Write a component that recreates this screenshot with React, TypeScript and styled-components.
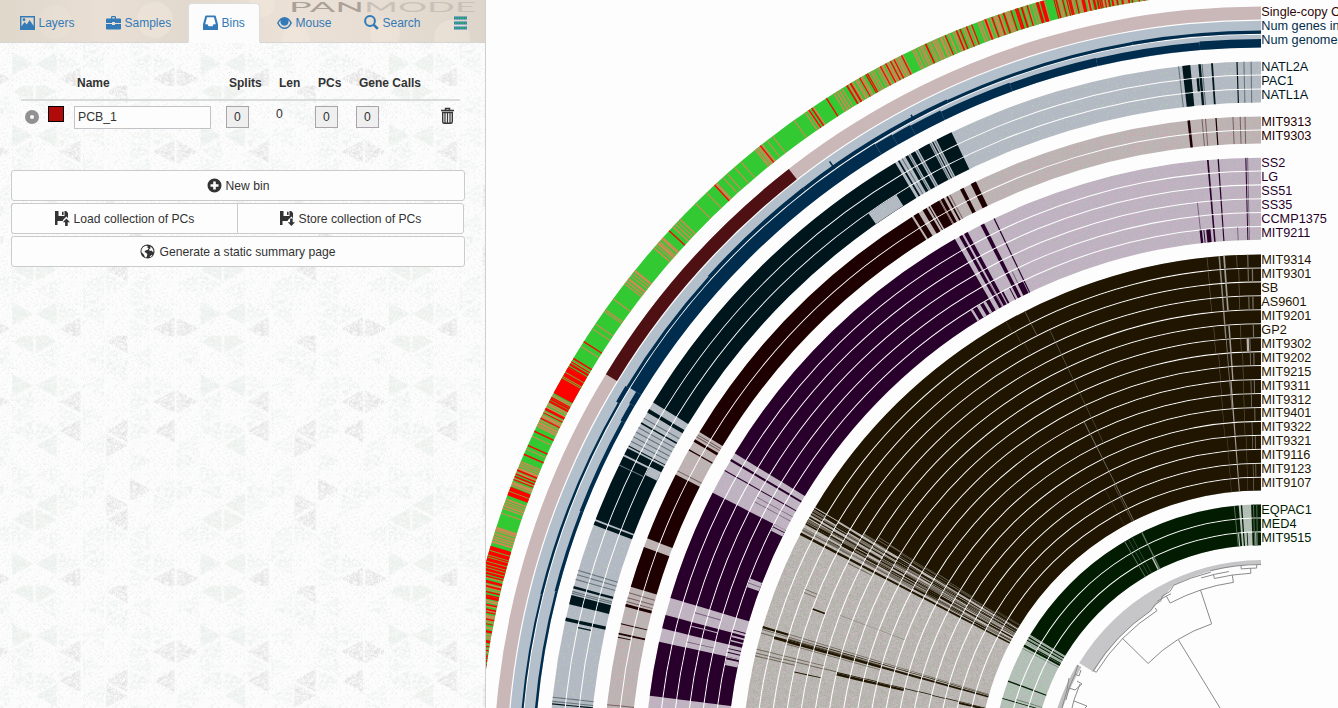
import React from 'react';
import styled, { createGlobalStyle } from 'styled-components';

const GlobalStyle = createGlobalStyle`
  * { box-sizing: border-box; }
  body {
    margin: 0;
    background: #fdfdfd;
    font-family: "Liberation Sans", Arial, sans-serif;
    font-size: 12.15px;
    color: #333;
    overflow: hidden;
  }
`;

const Page = styled.div`
  display: flex;
  width: 1338px;
  height: 708px;
  overflow: hidden;
`;

const Panel = styled.aside`
  position: relative;
  display: flex;
  flex-direction: column;
  flex: none;
  width: 486px;
  height: 708px;
  border-right: 1px solid #cfcfcf;
  background: #fcfcfc;
`;

const Backdrop = styled.svg`
  position: absolute;
  inset: 0;
`;

const TabBar = styled.nav`
  position: relative;
  display: flex;
  align-items: flex-end;
  gap: 2px;
  height: 43px;
  padding-left: 5px;
  border-bottom: 1px solid #d6d6d6;
  background: linear-gradient(90deg, #e0d7cb 0, #e9dfd4 22%, #e2d9ce 38%, #ebe1d6 60%, #e7ddd2 78%, #ddd5cb 100%);
`;

const Glow = styled.svg`
  position: absolute;
  left: 0;
  top: 0;
`;

const Tab = styled.a<{ $width: number; $active?: boolean }>`
  position: relative;
  display: flex;
  align-items: center;
  gap: 3.5px;
  width: ${(p) => p.$width}px;
  height: 40px;
  margin-bottom: -1px;
  padding: 0 0 1px 14px;
  border: 1px solid ${(p) => (p.$active ? '#ddd' : 'transparent')};
  border-bottom-color: ${(p) => (p.$active ? '#fcfcfc' : 'transparent')};
  border-radius: 4px 4px 0 0;
  background: ${(p) => (p.$active ? '#fcfcfc' : 'transparent')};
  color: #337ab7;
  font-size: 12px;
  white-space: nowrap;
`;

const Icon = styled.svg`
  flex: none;
  display: block;
  fill: currentColor;
`;

const BinTable = styled.section`
  position: relative;
  margin: 27px 25px 0 21px;
`;

const BinGrid = styled.div`
  display: grid;
  grid-template-columns: 24px 29px 152px 50px 39px 41px 85px 1fr;
`;

const HeadRow = styled(BinGrid)`
  height: 31px;
  padding-top: 6px;
  border-bottom: 2px solid #dadcdb;
  font-size: 12px;
  font-weight: bold;
`;

const HeadCell = styled.span`
  padding-left: 3px;
  white-space: nowrap;
`;

const BinRow = styled(BinGrid)`
  padding-top: 5px;
  height: 31px;
`;

const Radio = styled.span`
  width: 14px;
  height: 14px;
  margin: 4px 0 0 4px;
  border: 5px solid #919194;
  border-radius: 50%;
  background: #fcfcfc;
`;

const Swatch = styled.span`
  width: 16px;
  height: 16px;
  margin-left: 3px;
  border: 1px solid #000;
  background: #b00a0a;
`;

const NameField = styled.div`
  width: 137px;
  height: 23px;
  padding: 3px 3px;
  border: 1px solid #c4c2c6;
  background: #fdfdfd;
  font-size: 12.3px;
`;

const CountButton = styled.button`
  width: 23px;
  height: 22px;
  padding: 0 0 1px;
  border: 1px solid #aaa5ab;
  background: #efefef;
  color: #333;
  font: inherit;
`;

const Length = styled.span`
  padding: 1px 0 0 0;
`;

const Actions = styled.section`
  position: relative;
  display: flex;
  flex-direction: column;
  gap: 2px;
  margin: 38px 20px 0 11px;
`;

const ButtonPair = styled.div`
  display: flex;
  padding-right: 1px;
`;

const Button = styled.button<{ $side?: 'left' | 'right' }>`
  display: flex;
  flex: ${(p) => (p.$side === 'left' ? '0 0 226px' : '1 1 auto')};
  align-items: center;
  justify-content: center;
  gap: 4px;
  height: 31px;
  padding: 0;
  border: 1px solid #cbcbcb;
  border-right-width: ${(p) => (p.$side === 'left' ? 0 : 1)}px;
  border-radius: ${(p) => (p.$side === 'left' ? '3px 0 0 3px' : p.$side === 'right' ? '0 3px 3px 0' : '3px')};
  background: #fdfdfd;
  color: #333;
  font: inherit;
  font-size: 12.15px;
`;

const Display = styled.main`
  flex: 1;
  height: 708px;
  background: #fdfdfd;
`;

const Figure = styled.svg`
  display: block;
`;

const random = (seed: number) => {
  let s = seed;
  return () => {
    s = (s * 1664525 + 1013904223) % 4294967296;
    return s / 4294967296;
  };
};

interface SpeckleProps {
  id: string;
  base: string;
  specks: string[];
  share: number;
  seed: number;
}

// A repeating tile of single-pixel specks over a plain base.
const Speckle = ({ id, base, specks, share, seed }: SpeckleProps) => {
  const rnd = random(seed);
  const size = 32;
  const cells: Record<string, string> = {};
  for (let y = 0; y < size; y++)
    for (let x = 0; x < size; x++) {
      if (rnd() > share) continue;
      const color = specks[Math.floor(rnd() * specks.length)];
      cells[color] = (cells[color] ?? '') + `M${x} ${y}h1v1h-1z`;
    }
  return (
    <pattern id={id} width={size} height={size} patternUnits="userSpaceOnUse">
      <rect width={size} height={size} fill={base} />
      {Object.entries(cells).map(([color, d]) => (
        <path key={color} d={d} fill={color} shapeRendering="crispEdges" />
      ))}
    </pattern>
  );
};

/* ---------- side panel backdrop ---------- */

type Tone = 'd' | 'g' | 'f';

// [column, vertical centre, pointing direction, tone]
const TRIANGLES: [number, number, 'l' | 'r', Tone][] = [
  [0, 6, 'l', 'g'], [1, 6, 'r', 'g'], [4, 6, 'l', 'd'], [3, 21, 'l', 'f'], [4, 21, 'r', 'f'], [5, 21, 'l', 'f'], [7, 21, 'l', 'f'], [1, 21, 'l', 'f'], [4, 35, 'l', 'f'],
  [0, 50, 'r', 'g'], [1, 50, 'l', 'g'], [2, 50, 'r', 'f'], [3, 50, 'l', 'f'], [5, 50, 'l', 'f'], [6, 50, 'r', 'f'],
  [2, 66, 'l', 'd'], [6, 66, 'l', 'd'], [7, 66, 'r', 'd'], [5, 66, 'r', 'f'], [0, 66, 'l', 'f'],
  [0, 81, 'r', 'f'], [3, 81, 'r', 'f'], [5, 81, 'l', 'f'], [2, 81, 'r', 'f'],
  [2, 95, 'l', 'd'], [4, 95, 'l', 'd'], [6, 95, 'l', 'd'], [0, 95, 'l', 'f'], [1, 95, 'r', 'f'], [5, 95, 'r', 'f'],
  [1, 110, 'l', 'g'], [4, 110, 'r', 'd'], [3, 110, 'l', 'f'], [7, 110, 'l', 'f'], [7, 125, 'r', 'f'], [5, 125, 'r', 'f'],
  [0, 139, 'r', 'f'], [1, 139, 'l', 'f'], [3, 139, 'l', 'f'], [5, 154, 'r', 'd'], [0, 154, 'l', 'f'], [3, 154, 'r', 'f'], [6, 154, 'l', 'f'], [7, 154, 'r', 'f'], [2, 154, 'r', 'f'],
  [1, 169, 'l', 'g'], [4, 169, 'r', 'd'], [2, 169, 'r', 'f'], [6, 169, 'r', 'f'], [0, 184, 'l', 'g'], [1, 184, 'r', 'g'], [4, 184, 'l', 'd'],
  [0, 199, 'r', 'f'], [3, 199, 'l', 'f'], [4, 199, 'r', 'f'], [5, 199, 'l', 'f'], [7, 199, 'l', 'f'], [3, 213, 'r', 'f'], [1, 205, 'l', 'f'], [5, 213, 'r', 'f'],
  [0, 228, 'r', 'g'], [1, 228, 'l', 'g'], [2, 228, 'r', 'f'], [3, 228, 'l', 'f'], [5, 228, 'l', 'f'], [6, 228, 'r', 'f'],
  [2, 243, 'l', 'd'], [6, 243, 'l', 'd'], [7, 243, 'r', 'd'], [5, 243, 'r', 'f'],
];

const triangle = (col: number, cy: number, dir: 'l' | 'r') => {
  const x0 = col * 23.54;
  const x1 = x0 + 21;
  const [base, apex] = dir === 'l' ? [x1, x0] : [x0, x1];
  return `${base},${cy - 11.5} ${apex},${cy} ${base},${cy + 11.5}`;
};

const PanelBackdrop = () => (
  <Backdrop width="485" height="708">
    <defs>
      <Speckle id="grain" base="#fcfcfc" specks={['#f1f3f2']} share={0.16} seed={4} />
      <Speckle id="tone-d" base="#fafafa" specks={['#e3e3e3', '#e7e7e7']} share={0.55} seed={11} />
      <Speckle id="tone-g" base="#eff3f0" specks={['#e9eeeb', '#f8faf9']} share={0.5} seed={23} />
      <Speckle id="tone-f" base="#fbfcfb" specks={['#ecf0ee']} share={0.36} seed={37} />
      <pattern id="mosaic" x="12.3" y="85.7" width="188.3" height="250" patternUnits="userSpaceOnUse">
        {TRIANGLES.map(([c, y, d, t], i) => (
          <polygon key={i} points={triangle(c, y, d)} fill={`url(#tone-${t})`} />
        ))}
      </pattern>
    </defs>
    <rect width="485" height="708" fill="url(#grain)" />
    <rect width="485" height="708" fill="url(#mosaic)" />
  </Backdrop>
);

/* ---------- circular phylogram ---------- */

const CX = 1261;
const CY = 774;
const rad = (deg: number) => (deg * Math.PI) / 180;
const pt = (r: number, deg: number) =>
  `${(CX - r * Math.sin(rad(deg))).toFixed(2)} ${(CY - r * Math.cos(rad(deg))).toFixed(2)}`;

// Ring sector between two radii; angles run counter-clockwise from twelve o'clock.
const sector = (outer: number, inner: number, from: number, to: number) =>
  `M${pt(outer, from)}A${outer} ${outer} 0 0 0 ${pt(outer, to)}L${pt(inner, to)}A${inner} ${inner} 0 0 1 ${pt(inner, from)}Z`;

const arc = (r: number, from: number, to: number) => `M${pt(r, from)}A${r} ${r} 0 0 0 ${pt(r, to)}`;

type Span = [number, number];
interface Mark {
  from: number;
  to: number;
  fill: string;
}

interface RingProps {
  outer: number;
  inner: number;
  base: string;
  marks: Mark[];
}

const Ring = ({ outer, inner, base, marks }: RingProps) => {
  const byFill = new Map<string, string>();
  marks.forEach((m) => byFill.set(m.fill, (byFill.get(m.fill) ?? '') + sector(outer, inner, m.from, m.to)));
  return (
    <g>
      <path d={sector(outer, inner, 0, 89)} fill={base} />
      {[...byFill].map(([fill, d]) => (
        <path key={fill} d={d} fill={fill} />
      ))}
    </g>
  );
};

const TEAL_LIGHT = 'url(#light-teal)';
const MAROON_LIGHT = 'url(#light-maroon)';
const PURPLE_LIGHT = 'url(#light-purple)';
const BROWN_LIGHT = 'url(#light-brown)';
const GREEN_LIGHT = 'url(#light-green)';

interface Group {
  top: number;
  pitch: number;
  thick: number;
  count: number;
  light: string;
  dark: string;
  mid: string;
  solid: Span[];
  thin: number[];
  extra?: (row: number) => Mark[];
}

const GROUPS: Group[] = [
  {
    top: 712.4, pitch: 14, thick: 13, count: 3, light: TEAL_LIGHT, dark: '#00161d', mid: '#66757b',
    solid: [
      [5.7, 6.35], [4.85, 5.05], [3.87, 4.02], [1.88, 1.98], [25.75, 27.1], [27.4, 27.5], [27.75, 28.75], [29.05, 29.45], [29.7, 29.95], [30.5, 30.65], [30.9, 58.57],
      [59.19, 59.5], [60.42, 60.55], [62.55, 62.63], [62.78, 63.35], [63.5, 69.05], [69.2, 69.53], [74.7, 74.9], [75.44, 76.21], [77.32, 77.59], [84.3, 84.4],
    ],
    thin: [6.6, 4.7, 1.33, 0.75, 27.2, 27.6, 28.85, 29.55, 30.2, 60.0, 60.86, 61.27, 61.7, 62.1, 73.35, 73.71, 74.1, 75.1, 75.25, 83.77, 84.1],
    extra: (row) => {
      if (row === 2) return [{ from: 32.2, to: 35, fill: TEAL_LIGHT }, { from: 63.3, to: 64.1, fill: TEAL_LIGHT }];
      if (row === 1) return [{ from: 77.85, to: 77.95, fill: '#00161d' }, { from: 64.25, to: 64.33, fill: '#66757b' }, { from: 5.1, to: 5.3, fill: '#00161d' }];
      return [{ from: 64.25, to: 64.33, fill: '#66757b' }];
    },
  },
  {
    top: 657.5, pitch: 14, thick: 13, count: 2, light: MAROON_LIGHT, dark: '#1f0000', mid: '#7a6060',
    solid: [
      [6.2, 6.43], [3.87, 3.98], [25.7, 26.2], [26.9, 27.24], [28.45, 28.6], [28.85, 29.15], [29.3, 30.16], [30.3, 30.38], [30.57, 30.97], [31.4, 31.9], [32.08, 58.65],
      [59.4, 59.65], [60.4, 60.52], [62.9, 69], [69.8, 73.45], [75, 75.25], [76.75, 76.83], [77.6, 77.75],
    ],
    thin: [5.1, 4.8, 2.4, 1.77, 1.35, 28.2, 29.2, 58.9, 59.1, 62.5, 73.96, 74.4, 74.75, 83.9],
    extra: (row) => (row ? [] : [{ from: 77.95, to: 78.03, fill: '#1f0000' }]),
  },
  {
    top: 616.3, pitch: 13.85, thick: 12.8, count: 6, light: PURPLE_LIGHT, dark: '#28002b', mid: '#79617c',
    solid: [
      [4.87, 5.03], [3.92, 4.04], [1.36, 1.46], [25.6, 25.72], [26.7, 27.07], [28.43, 28.8], [29, 29.32], [29.78, 58.64],
      [59.26, 59.47], [60.44, 60.54], [62.84, 73.4], [75.05, 76.33], [77.6, 82.7],
    ],
    thin: [1.2],
    extra: (row) => {
      const dark = '#28002b';
      const light = PURPLE_LIGHT;
      const mid = '#79617c';
      const marks: Mark[] = [];
      if (row >= 3) marks.push({ from: 6.3, to: 6.4, fill: mid }, { from: 61.2, to: 61.27, fill: mid }, { from: 61.7, to: 61.78, fill: mid });
      if (row >= 4) marks.push({ from: 28.9, to: 29, fill: mid }, { from: 26.3, to: 26.4, fill: mid });
      if (row === 2 || row === 3) marks.push({ from: 74.05, to: 74.15, fill: mid }, { from: 75.4, to: 75.5, fill: light }, { from: 77, to: 77.08, fill: mid });
      if (row === 5)
        marks.push(
          { from: 5.3, to: 5.75, fill: dark }, { from: 6.2, to: 6.45, fill: dark }, { from: 5.95, to: 6.05, fill: dark }, { from: 2.4, to: 2.5, fill: mid },
          { from: 25.8, to: 26.4, fill: dark }, { from: 27.3, to: 27.4, fill: dark }, { from: 28.1, to: 28.3, fill: dark },
          { from: 30.2, to: 30.5, fill: light }, { from: 30.9, to: 31.3, fill: light }, { from: 31.8, to: 32.05, fill: light },
          { from: 62.84, to: 63.6, fill: light }, { from: 63.1, to: 63.2, fill: dark }, { from: 69.05, to: 70, fill: light },
          { from: 69.5, to: 69.6, fill: mid }, { from: 74.7, to: 74.8, fill: dark }, { from: 75.3, to: 75.5, fill: light },
          { from: 75.8, to: 75.95, fill: light }, { from: 76.7, to: 76.8, fill: dark }, { from: 77.1, to: 77.2, fill: dark },
          { from: 77.6, to: 78.5, fill: light }, { from: 77.7, to: 77.9, fill: dark },
        );
      return marks;
    },
  },
  {
    top: 519.5, pitch: 13.95, thick: 12.9, count: 17, light: BROWN_LIGHT, dark: '#1f1500', mid: '#777064',
    solid: [[0, 59.1], [59.45, 59.62], [59.95, 60.1], [60.65, 60.75], [61.1, 61.3], [62.3, 62.6]],
    thin: [59.8, 60.4, 61.7],
    extra: (row) => {
      const rnd = random(911 + row * 57);
      const dark = '#1f1500';
      const mid = '#6f675a';
      const light = BROWN_LIGHT;
      const marks: Mark[] = [];
      const lines = (at: number, w: number, fill: string) => marks.push({ from: at, to: at + w, fill });
      for (let k = 0; k < 11; k++) lines(59.2 + rnd() * 2.8, 0.1 + rnd() * 0.16, k % 2 ? dark : mid);
      if (row > 3) for (let k = 0; k < 3; k++) lines(58.2 + rnd() * 0.8, 0.1, mid);
      if (row < 11) lines(4.52, row < 6 ? 0.18 : 0.1, '#8b857c');
      if (row !== 4) {
        lines(3.98 + (row > 8 ? 0.3 : 0), 0.2, '#a19c95');
        if (row % 3 !== 2) lines(1.4, 0.13, '#777064');
        lines(2.45 + rnd() * 0.2, 0.1, '#5b5345');
        if (row % 2) lines(0.9, 0.15, '#777064');
        lines(5.7 + rnd() * 0.4, 0.08, '#5b5345');
      }
      if (row === 6) lines(1.6, 0.3, light);
      if (row > 1 && row < 11) lines(25.4, 0.09, '#5b5345');
      if (row > 8) lines(26.6, 0.14, '#777064');
      if (row > 13) lines(26.95, 0.14, '#5b5345');
      if (row > 13) lines(28.7, 0.1, '#463c2a');
      if (row < 3) lines(28.4 + rnd(), 0.07, '#463c2a');
      if (row < 2) lines(27, 0.1, '#5b5345');
      lines(73.45 + row * 0.01, row < 2 ? 0.25 : 0.1, row < 2 ? dark : mid);
      lines(73.8, 0.1, row > 3 ? dark : mid);
      lines(row < 2 ? 74.2 : 74.25 - row * 0.014, row < 1 ? 0.1 : 0.32, row < 1 ? mid : dark);
      if (row > 1 && row < 9) { lines(73.98, 0.15, mid); lines(74.65, 0.1, mid); lines(74.1, 0.1, dark); }
      lines(76.4 + rnd() * 0.1, 0.12, row > 5 ? dark : mid);
      if (row < 5) lines(76.05, 0.1, mid);
      if ((row > 5 && row < 11) || row > 14) lines(76.6, 0.35, dark);
      if (row > 2 && row < 5) lines(77.6, 0.12, dark);
      if (row < 3) lines(76.8, 0.12, mid);
      if (row === 3) lines(69.7, 0.2, dark);
      if (row === 2) { lines(67.9, 0.1, mid); lines(68.3, 0.1, mid); }
      if (row > 4 && row < 10) lines(69.3, 0.1, '#948e86');
      if (row === 4 || row === 5) lines(62.9, 0.12, mid);
      return marks;
    },
  },
  {
    top: 269.5, pitch: 13.95, thick: 12.9, count: 3, light: GREEN_LIGHT, dark: '#021c02', mid: '#5f7461',
    solid: [[0, 2.1], [4, 4.3], [4.75, 58.9], [59.4, 59.7], [60.1, 60.35], [61.3, 61.8], [69.7, 70], [73.6, 73.8]],
    thin: [59.1, 59.9, 60.6, 60.9, 62.2],
    extra: (row) => {
      const mid = '#5f7461';
      const marks: Mark[] = [
        { from: 30.3, to: 30.5, fill: mid }, { from: 29.4, to: 29.55, fill: '#3d543f' }, { from: 26.1, to: 26.4, fill: mid },
        { from: 28.5, to: 28.65, fill: '#3d543f' }, { from: 0.8, to: 1, fill: mid }, { from: 1.5, to: 1.7, fill: mid }, { from: 5.6, to: 5.8, fill: mid },
      ];
      if (row === 2) marks.push({ from: 26.5, to: 26.85, fill: GREEN_LIGHT }, { from: 1.1, to: 1.4, fill: GREEN_LIGHT }, { from: 5.2, to: 5.5, fill: GREEN_LIGHT }, { from: 3.2, to: 3.4, fill: '#021c02' });
      if (row > 0) marks.push({ from: 61, to: 61.25, fill: '#021c02' }, { from: 73, to: 73.15, fill: mid });
      return marks;
    },
  },
];

const GroupRings = ({ group }: { group: Group }) => (
  <>
    {Array.from({ length: group.count }, (_, row) => {
      const outer = group.top - row * group.pitch;
      const marks: Mark[] = [
        ...group.solid.map(([from, to]) => ({ from, to, fill: group.dark })),
        ...group.thin.map((a) => ({ from: a, to: a + 0.09, fill: group.mid })),
      ];
      return (
        <g key={row}>
          <Ring outer={outer} inner={outer - group.thick} base={group.light} marks={marks} />
          {(group.extra?.(row) ?? []).map((m, i) => (
            <path key={i} d={sector(outer, outer - group.thick, m.from, m.to)} fill={m.fill} />
          ))}
        </g>
      );
    })}
  </>
);

const RED = '#ff0000';
const TAN = '#cc8a55';
const GREEN = '#33c933';

// [from, to, stripes per degree, share of red stripes]
const CLUSTERS: [number, number, number, number][] = [
  [8, 15, 7, 0.5], [15.5, 20.6, 6, 0.4], [21, 25.7, 6, 0.2], [26.4, 28.6, 8, 0.4], [28.7, 31.1, 6, 0.35], [31.2, 32.2, 4, 0],
  [33.7, 34.6, 5, 0.3], [38.3, 39.1, 8, 0], [42.4, 43, 4, 0], [46.1, 47.2, 4, 0], [48, 49.1, 6, 0], [51, 52.5, 5, 0],
  [58.8, 59.6, 7, 0.5], [61.7, 63.3, 8, 0.6], [63.3, 64.4, 8, 0.15], [67, 69, 7, 0.3], [69.85, 70.7, 8, 0], [72, 73.3, 7, 0], [75.4, 82.4, 7, 0.5],
];

const outerMarks = (): Mark[] => {
  const rnd = random(20);
  const marks: Mark[] = [];
  CLUSTERS.forEach(([from, to, density, redShare]) => {
    const n = Math.round((to - from) * density);
    for (let i = 0; i < n; i++) {
      const at = from + ((i + rnd() * 0.8) * (to - from)) / n;
      marks.push({ from: at, to: at + 0.07 + rnd() * 0.06, fill: rnd() < redShare ? RED : TAN });
    }
  });
  [32.7, 34.2, 38.5, 42.8, 47.4, 57.4, 64.7, 65.8, 66.5, 21.45].forEach((a) => marks.push({ from: a, to: a + 0.1, fill: RED }));
  [35.5, 37.4, 37.9, 40.3, 40.9, 41.6, 42, 43.6, 44.7, 53.7, 54.65, 54.8, 55.9, 56.3, 57.8, 65.1, 66.1, 71].forEach((a) =>
    marks.push({ from: a, to: a + 0.08, fill: TAN }),
  );
  marks.push({ from: 15.7, to: 15.95, fill: RED }, { from: 59.6, to: 61.7, fill: RED }, { from: 69.05, to: 69.7, fill: RED }, { from: 73.5, to: 75.5, fill: RED });
  return marks;
};

const greenOverRed = [59.95, 60.3, 60.42, 69.35, 73.8, 74.15, 74.3, 74.6, 74.85, 75.05, 75.3];

const LIGHT_BLUE = '#b3bfca';
const NAVY = '#002d4d';

// Bar heights along the two gene-count tracks: [from, to, height]
const GENES: [number, number, number][] = [
  [0, 10, 3.2], [10, 25, 3], [25, 38, 3.8], [38, 48, 4], [48, 58.6, 3.2], [58.6, 60, 4.3], [60, 76, 2.4], [76, 89, 2],
  [27.9, 28.02, 6], [35.1, 35.22, 9],
];
const GENOMES: [number, number, number][] = [
  [0, 4.8, 8.6], [4.8, 13, 7.8], [13, 20, 8.3], [20, 25.8, 9.2], [25.8, 28.4, 10.4], [28.4, 30, 11.2], [30, 31.5, 12],
  [31.5, 58.55, 12.8], [58.55, 59.6, 6], [59.6, 61.1, 5], [61.1, 68.9, 3.9], [68.9, 75.5, 3.2], [75.5, 89, 2.5],
];

const LABELS: { y: number; color: string; pitch: number; names: string[] }[] = [
  { y: 16, color: '#300808', pitch: 14, names: ['Single-copy Core Genes'] },
  { y: 30, color: '#002d4d', pitch: 14, names: ['Num genes in PC', 'Num genomes PC has hits'] },
  { y: 71, color: '#00161d', pitch: 14, names: ['NATL2A', 'PAC1', 'NATL1A'] },
  { y: 126, color: '#1f0000', pitch: 14, names: ['MIT9313', 'MIT9303'] },
  { y: 167, color: '#28002b', pitch: 14, names: ['SS2', 'LG', 'SS51', 'SS35', 'CCMP1375', 'MIT9211'] },
  {
    y: 264, color: '#1f1500', pitch: 13.95,
    names: ['MIT9314', 'MIT9301', 'SB', 'AS9601', 'MIT9201', 'GP2', 'MIT9302', 'MIT9202', 'MIT9215', 'MIT9311', 'MIT9312', 'MIT9401', 'MIT9322', 'MIT9321', 'MIT9116', 'MIT9123', 'MIT9107'],
  },
  { y: 514, color: '#021c02', pitch: 14, names: ['EQPAC1', 'MED4', 'MIT9515'] },
];

const Dendrogram = () => (
  <g>
    <path
      d={`M${pt(214, 0)}A214 214 0 0 0 ${pt(213, 58.6)}L${pt(196, 58.6)}A196 196 0 0 1 ${pt(197, 34)}L${pt(204, 27.5)}L${pt(208, 25)}A208 208 0 0 1 ${pt(210, 0)}Z`}
      fill="#c6c6c8"
    />
    <path d={sector(214, 209, 59.2, 80)} fill="#bfbfc1" />
    <g fill="none" stroke="#8a8a8a" strokeWidth="1">
      <path d={arc(209.5, 0, 14)} />
      <path d={arc(208, 14, 25)} />
      <path d={arc(197, 34, 58.6)} />
      <path d={`M${pt(207.5, 25)}L${pt(204, 26.5)}L${pt(203.5, 29)}L${pt(200, 30)}L${pt(200, 32)}L${pt(197, 34)}`} />
      <path d="M1178.5 640L1220 708" />
      <path d={arc(158, 18.2, 45.6)} />
      <path d={`M${pt(158, 18.2)}L${pt(193.6, 18.2)}`} />
      <path d={`M${pt(158, 45.6)}L${pt(193.6, 45.6)}`} />
      <path d={arc(193.6, 8.2, 28)} />
      <path d={`M${pt(193.6, 8.2)}L${pt(201, 8.2)}`} />
      <path d={arc(201, 2.9, 13.4)} />
      <path d={`M${pt(201, 2.9)}L${pt(206, 2.9)}M${pt(201, 13.4)}L${pt(205, 13.4)}`} />
      <path d={arc(206, 1.2, 5.5)} />
      <path d={`M${pt(206, 1.2)}L${pt(209, 1.2)}M${pt(206, 5.5)}L${pt(209, 5.5)}`} />
      <path d={arc(205, 9, 17)} />
      <path d={`M${pt(193.6, 28)}L${pt(201.5, 28)}`} />
      <path d={arc(201.5, 26.5, 31)} />
      <path d={arc(193.6, 32.5, 58.3)} />
      <path d={`M${pt(193.6, 32.5)}L${pt(197, 32.5)}M${pt(193.6, 58.3)}L${pt(197, 58.3)}`} />
      <path d="M1078 665L1075 674L1079 676L1081 670M1075 674L1069 688L1075 690L1082 684L1077 681M1069 688L1066 700M1074 701L1087 706L1085 708M1080 684L1074 700L1072 708M1069 678L1067 690L1062 708" />
    </g>
  </g>
);

const Phylogram = () => (
  <Figure width="852" height="708" viewBox="486 0 852 708">
    <defs>
      <Speckle id="light-teal" base="#b4bac3" specks={['#b2c8b8', '#bcb8c8', '#adb9bf']} share={0.22} seed={51} />
      <Speckle id="light-maroon" base="#beb4b4" specks={['#c8aab0', '#b2bab0', '#b8b0b4']} share={0.3} seed={63} />
      <Speckle id="light-purple" base="#c0b4c1" specks={['#ccaacb', '#b0b8b8', '#b8b0c0']} share={0.3} seed={77} />
      <Speckle id="light-brown" base="#bab5b2" specks={['#adbaa6', '#c4b4b8', '#b0aaa4', '#c2c0ba']} share={0.42} seed={85} />
      <Speckle id="light-green" base="#b5beb8" specks={['#a4d0a6', '#bdb8c0', '#aabdb0']} share={0.36} seed={99} />
    </defs>
    <Ring outer={803.5} inner={782} base={GREEN} marks={outerMarks()} />
    {greenOverRed.map((a) => (
      <path key={a} d={sector(803.5, 782, a, a + 0.07)} fill="#74b02a" />
    ))}
    <Ring outer={767.5} inner={754.5} base="#cab7b8" marks={[{ from: 37.97, to: 58.6, fill: '#4f1013' }]} />
    <Ring outer={753.3} inner={740.3} base={LIGHT_BLUE} marks={[]} />
    {GENES.map(([from, to, h], i) => (
      <path key={i} d={sector(740.3 + h, 740.3, from, to)} fill={NAVY} />
    ))}
    <Ring outer={739.3} inner={726.5} base={LIGHT_BLUE} marks={[]} />
    {GENOMES.map(([from, to, h], i) => (
      <path key={i} d={sector(726.5 + h, 726.5, from, to)} fill={NAVY} />
    ))}
    {GROUPS.map((group, i) => (
      <GroupRings key={i} group={group} />
    ))}
    <Dendrogram />
    <g fontFamily='"Liberation Sans", Arial, sans-serif' fontSize="12.7">
      {LABELS.map((set) =>
        set.names.map((name, i) => (
          <text key={name} x="1261.3" y={set.y + i * set.pitch} fill={set.color}>
            {name}
          </text>
        )),
      )}
    </g>
  </Figure>
);

/* ---------- icons ---------- */

const PictureIcon = () => (
  <Icon width="15" height="14" viewBox="0 0 15 14">
    <path fillRule="evenodd" d="M0 0h15v14H0zM1.4 1.4v9.2L4.6 6l2.2 2.6L9.6 4l4 6V1.4z" />
    <circle cx="4" cy="3.7" r="1.4" />
  </Icon>
);

const BriefcaseIcon = () => (
  <Icon width="15" height="14" viewBox="0 0 15 14">
    <path fillRule="evenodd" d="M5 2.6V1.2Q5 0 6.2 0h2.6Q10 0 10 1.2v1.4h4q1 0 1 1V7H9V6H6v1H0V3.600q0-1 1-1zM6.2 2.600h2.600V1.200H6.200z" />
    <path d="M0 8h6v1h3V8h6v4.600q0 .9-1 .9H1q-1 0-1-.9z" />
  </Icon>
);

const InboxIcon = () => (
  <Icon width="15" height="15" viewBox="0 0 15 15">
    <path fillRule="evenodd" d="M3.200.500h8.600q.8 0 1 .8L15 9.300V15H0V9.300L2.200 1.300q.2-.8 1-.8zM4 2.200 2.200 9.200h2.300l1 2h4l1-2h2.300L11 2.200z" />
  </Icon>
);

const EyeIcon = () => (
  <Icon width="15" height="12" viewBox="0 0 15 12">
    <path fillRule="evenodd" d="M0 6Q3 0 7.500 0T15 6Q12 12 7.500 12T0 6zM1.700 6q2.200 4.500 5.800 4.500T13.300 6Q12.600 4.300 11.300 3.200a4.100 4.100 0 1 1-7.600 0Q2.400 4.300 1.700 6z" />
    <path d="M7.500 1.300a3.500 3.500 0 1 0 3.500 3.500 3.500 3.500 0 0 0-3.500-3.500zm-.4 1.200v1.200a1.500 1.500 0 0 0-1.500 1.500H4.600A2.600 2.600 0 0 1 7.100 2.500z" fillRule="evenodd" />
  </Icon>
);

const SearchIcon = () => (
  <Icon width="15" height="15" viewBox="0 0 15 15">
    <path d="M9.800 9.800 13.800 13.800" stroke="currentColor" strokeWidth="2.600" />
    <circle cx="6" cy="6" r="4.900" fill="none" stroke="currentColor" strokeWidth="2" />
  </Icon>
);

const MenuIcon = () => (
  <Icon width="13" height="14" viewBox="0 0 13 14">
    {[0.5, 5.5, 10.5].map((y) => (
      <g key={y}>
        <rect y={y} width="13" height="3" />
        <path d={`M1 ${y + 1.5}H13`} stroke="#2fc24f" strokeWidth="1.3" strokeDasharray="1.5 1" />
      </g>
    ))}
  </Icon>
);

const PlusIcon = () => (
  <Icon width="15" height="15" viewBox="0 0 15 15">
    <path fillRule="evenodd" d="M7.500.500a7 7 0 1 0 0 14 7 7 0 0 0 0-14zM6.200 3.500h2.600v2.700h2.700v2.600H8.800v2.700H6.200V8.800H3.500V6.200h2.700z" />
  </Icon>
);

const FloppyIcon = ({ up }: { up?: boolean }) => (
  <Icon width="15" height="15" viewBox="0 0 15 15">
    <path fillRule="evenodd" d="M0 0h3.500v5h6V0h1.700L13 2v5.200l-1.600-1.600L7.800 9.300v.7H2.500v4H0zM7 .800h1.600v3.200H7z" />
    <path d={up ? 'M11.400 7.500 15 11.200h-2.300V15h-2.600v-3.800H7.800z' : 'M10.100 7.500h2.600v3.700H15L11.400 15 7.800 11.200h2.300z'} />
  </Icon>
);

const GlobeIcon = () => (
  <Icon width="15" height="15" viewBox="0 0 15 15">
    <circle cx="7.500" cy="7.500" r="7" />
    <path fill="#fdfdfd" d="M3 3.200 5.500 1.800l2.300.3-.6 1.400 1.500.8-1.300 1.600-1.700.4L4.300 8l1.900.8 1.200 1.800-.9 2.700-1.300.2-1.600-3.300L1.500 8.300 1.600 5.600zM10 2.200l2.200 1.700 1.300 2.600-.4 1.700-1.600-1.600-1.800.3-.6-1.700 1.500-1zM9.500 12.800l2-1.800.9.300-1.600 1.600z" />
  </Icon>
);

const TrashIcon = () => (
  <Icon width="13" height="18" viewBox="0 0 13 18">
    <g fill="none" stroke="#37373a" transform="translate(0 1)">
      <path d="M0 3.500H13M4.500 3V1.500H8.500V3" strokeWidth="1.500" />
      <path d="M1.700 5.500H11.300V14.500Q11.300 16.300 9.800 16.300H3.200Q1.700 16.300 1.700 14.500Z" strokeWidth="1.400" />
      <path d="M4 6V16M6.500 6V16M9 6V16" strokeWidth="1.200" />
    </g>
  </Icon>
);

const ModeTitle = () => (
  <Glow width="485" height="42">
    <g fill="#f6ecdf" opacity="0.4">
      <circle cx="155" cy="20" r="18" />
      <circle cx="55" cy="22" r="17" opacity="0.5" />
      <circle cx="385" cy="34" r="15" />
      <circle cx="452" cy="38" r="18" />
      <circle cx="296" cy="40" r="14" />
      <circle cx="262" cy="4" r="13" />
    </g>
    <g fontFamily="Lato, sans-serif" fontSize="14">
      <text x="289" y="11.5" textLength="75" lengthAdjust="spacingAndGlyphs" fill="#aaa198">PAN</text>
      <text x="364" y="11.5" textLength="112" lengthAdjust="spacingAndGlyphs" fill="#c9c1b9">MODE</text>
    </g>
  </Glow>
);

export default function App() {
  return (
    <>
      <GlobalStyle />
      <Page>
        <Panel>
          <PanelBackdrop />
          <TabBar>
            <ModeTitle />
            <Tab $width={84}><PictureIcon />Layers</Tab>
            <Tab $width={95}><BriefcaseIcon />Samples</Tab>
            <Tab $width={72} $active><InboxIcon />Bins</Tab>
            <Tab $width={85}><EyeIcon />Mouse</Tab>
            <Tab $width={88}><SearchIcon />Search</Tab>
            <Tab $width={44}><MenuIcon /></Tab>
          </TabBar>
          <BinTable>
            <HeadRow>
              <span />
              <span />
              <HeadCell>Name</HeadCell>
              <HeadCell>Splits</HeadCell>
              <HeadCell>Len</HeadCell>
              <HeadCell>PCs</HeadCell>
              <HeadCell>Gene Calls</HeadCell>
            </HeadRow>
            <BinRow>
              <Radio />
              <Swatch />
              <NameField>PCB_1</NameField>
              <CountButton>0</CountButton>
              <Length>0</Length>
              <CountButton>0</CountButton>
              <CountButton>0</CountButton>
              <TrashIcon />
            </BinRow>
          </BinTable>
          <Actions>
            <Button><PlusIcon />New bin</Button>
            <ButtonPair>
              <Button $side="left"><FloppyIcon up />Load collection of PCs</Button>
              <Button $side="right"><FloppyIcon />Store collection of PCs</Button>
            </ButtonPair>
            <Button><GlobeIcon />Generate a static summary page</Button>
          </Actions>
        </Panel>
        <Display>
          <Phylogram />
        </Display>
      </Page>
    </>
  );
}
